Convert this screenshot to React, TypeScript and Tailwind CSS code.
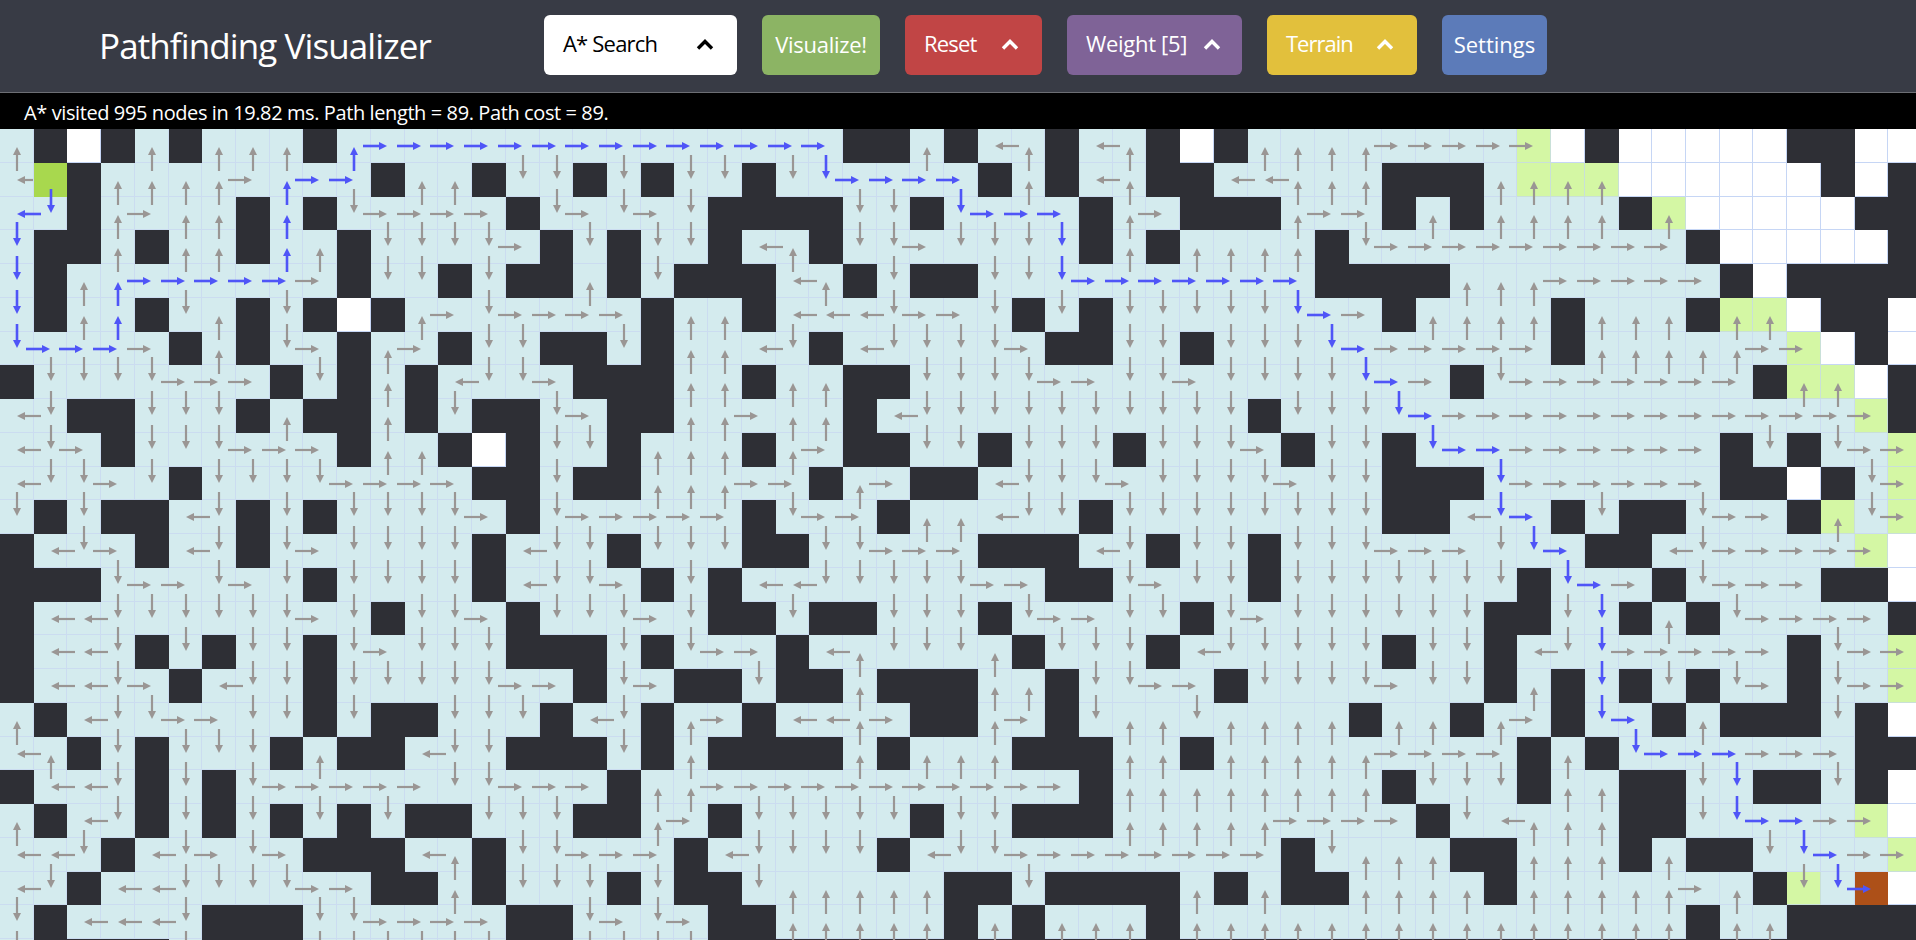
const GRID = [
  "u#_#u#uuu#URRRRRRRRRRRRRR##u#lu#lu#_#uuuurrrre_#_____##__",
  "lS#uuuurURR#uu#dd#d#dd#dDRRRR#u#lu##lluuu###unnn______#_#",
  "LD#uruu#U#drrrr#drdrd####dd#DRRR#ur###urr#u#uuuu#n_____##",
  "D##u#uu#Uu#ddddr#d#dd#lu#ddrdddD#u#uuuu#drrrrrrrrr#_____#",
  "D#uURRRRRr#dd#d##u#d###lu#d##ddDRRRRRRR####uuurrrrr#_####",
  "D#uU#du#d#_#urdrrrr#uu#llldrrd#d#dddddDRr#uuuu#uuu#nn_##_",
  "DRRRr#u#dr#ur#dd##d#uuld#lddddr##dd#dddDRrrrrr#uuuuure_#_",
  "#ddddrrr#d#u#lddr###uu#uu##ddddrrddrddddDRr#drrrrrrr#nn_#",
  "ld##ddd#u##u#d##dr##uuruu#ldddddddddd#dddDRrrrrrrrrrrrre#",
  "ldr#dddrrr#uu#_#dd#uuu#ur##dd#ddd#dddr#dd#DRRrrrrrr#d#dre",
  "lddrd#ddddrrrr##d##uuurr#ur##ldddrddddrdd###Drrrrrr##_#de",
  "d#d##ld#d#ddddr#drrrrr#drr#uuldd#dddddddd##lDR#d##drr#nde",
  "#ldr#ld#drdddd#ldd#ddd##ddrrr###ld#dd#dddrrrdDR##ldrrrre_",
  "###drrdrd#dddd#lddr#d#lldddddrr##drdd#ddddddd#DRr#drrr##_",
  "#llddddddrd#ddr#dddrd##d##ddd#drrdd#drdddddd##dD#u#drrrr#",
  "#lld#d#dd#drddd###d#drr#ludddu#ddd#lddddd#dd#ldDrrrrr#dre",
  "#lldr#ldd#dddddrr#dr##d##u###uu#ddrr#ddddrdd#u#D#d#dr#dre",
  "u#lddrrdd#d##ddd#ld#ur#llur##ur#duuduuuu#uu#ur#DR#u###d#_",
  "lu#d#ddd#u##ldd###d#u####u#uuu###uu#uuuuurrrr#u#DRRRrrr##",
  "#lld#d#drrrrrddrrr#uurrrrrrrrrrr#uuuuuuuu#ddd#uu##dD##d#_",
  "u#ld#d#d#d#d##ddd##ur#ddddd#dd###uuuuurrrr#dluuu##dDRRre_",
  "lld#ldrdr###lu#ddrrr#ldddd#lddrrrrrrrr#duuu##uuu#u##dDRre",
  "ld#llddddrr##u#ddd#d##duuuuu##d####u#u##uuuu#uuuuuru#sDE_",
  "d#llld###ddrrrr##drdr##uuuuu#u#uuu#uuuuuuuuuuuuuuu#uu####",
  "d####d###dddddd##dddd".padEnd(57, "#"),
];

const CELL_BG: Record<string, string> = {
  "#": "bg-[#2e2f35]",
  _: "bg-white border-r border-b border-[#c6d6f5]",
  S: "bg-[#a8d84e]",
  E: "bg-[#ad5018]",
};

const GRAY = "#9a9694";
const BLUE = "#4f55f7";

const SHAFTS: Record<string, string> = {
  u: "M17 42V25",
  d: "M17 -8V9",
  l: "M41 17H24",
  r: "M-8 17H9",
};

const HEADS: Record<string, string> = {
  u: "M17 18l4 8h-8z",
  d: "M17 16l4 -8h-8z",
  l: "M17 17l8 -4v8z",
  r: "M16 17l-8 -4v8z",
};

// frontier cells keep the grey arrow, path cells use the upper case letter
const DIRECTION: Record<string, string> = {
  u: "u", d: "d", l: "l", r: "r",
  n: "u", s: "d", w: "l", e: "r",
  U: "u", D: "d", L: "l", R: "r", E: "r",
};

function Arrow({ ch, clipped }: { ch: string; clipped: boolean }) {
  const dir = DIRECTION[ch];
  if (!dir) return null;
  const blue = ch === ch.toUpperCase();
  const color = blue ? BLUE : GRAY;
  return (
    <svg className="absolute left-0 top-0 z-10 h-[33px] w-[33px] overflow-visible" viewBox="0 0 33 33">
      <path d={clipped ? "M33 17H24" : SHAFTS[dir]} stroke={color} strokeWidth={blue ? 2.6 : 2.2} fill="none" />
      <path d={HEADS[dir]} fill={color} />
    </svg>
  );
}

function Cell({ ch, clipped }: { ch: string; clipped: boolean }) {
  const frontier = ch === "n" || ch === "s" || ch === "w" || ch === "e";
  const bg = CELL_BG[ch] ?? (frontier ? "bg-[#d4f7a4] border-r border-b border-[#c9e0d8]" : "bg-[#d4ebee] border-r border-b border-[#cbdcf0]");
  return (
    <div className={`relative ${bg}`}>
      <Arrow ch={ch} clipped={clipped} />
    </div>
  );
}

function Chevron() {
  return (
    <svg width="18" height="12" viewBox="0 0 18 12" fill="none" stroke="currentColor" strokeWidth="3.4">
      <path d="M2 10.5l7 -7 7 7" />
    </svg>
  );
}

export default function App() {
  return (
    <div className="h-screen w-full overflow-hidden bg-white font-['Open_Sans',sans-serif]">
      <nav className="flex h-[93px] items-start gap-[25px] border-b border-[#6c6e74] bg-[#383b45] pl-[99px] pt-[15px]">
        <h1 className="mr-[88px] mt-[10px] w-[332px] whitespace-nowrap text-[35px] leading-[42px] tracking-[-0.9px] text-white">
          Pathfinding Visualizer
        </h1>
        <button className="flex h-[60px] w-[193px] items-center justify-between rounded-md bg-white pb-[3px] pl-[19px] pr-[23px] text-[22px] tracking-[-0.8px] text-black">
          A* Search
          <Chevron />
        </button>
        <button className="h-[60px] w-[118px] rounded-md bg-[#8cb464] pb-[2px] text-[22px] tracking-[-0.3px] text-white">
          Visualize!
        </button>
        <button className="flex h-[60px] w-[137px] items-center justify-between rounded-md bg-[#c14545] pb-[3px] pl-[19px] pr-[23px] text-[22px] tracking-[-0.8px] text-white">
          Reset
          <Chevron />
        </button>
        <button className="flex h-[60px] w-[175px] items-center justify-between rounded-md bg-[#7f6397] pb-[3px] pl-[19px] pr-[21px] text-[22px] tracking-[-0.3px] text-white">
          Weight [5]
          <Chevron />
        </button>
        <button className="flex h-[60px] w-[150px] items-center justify-between rounded-md bg-[#e2c03c] pb-[3px] pl-[19px] pr-[23px] text-[22px] tracking-[-1px] text-white">
          Terrain
          <Chevron />
        </button>
        <button className="h-[60px] w-[105px] rounded-md bg-[#5c7bb9] pb-[2px] text-[22px] text-white">
          Settings
        </button>
      </nav>
      <div className="flex h-[36px] items-center bg-black pl-[24px] pt-[4px] text-[20px] tracking-[-0.4px] text-white">
        A* visited 995 nodes in 19.82 ms. Path length = 89. Path cost = 89.
      </div>
      <div className="grid grid-cols-[repeat(57,33.72px)] auto-rows-[33.75px]">
        {GRID.map((row, r) =>
          row.split("").map((ch, c) => <Cell key={`${r}-${c}`} ch={ch} clipped={r === 1 && c === 0} />)
        )}
      </div>
    </div>
  );
}
